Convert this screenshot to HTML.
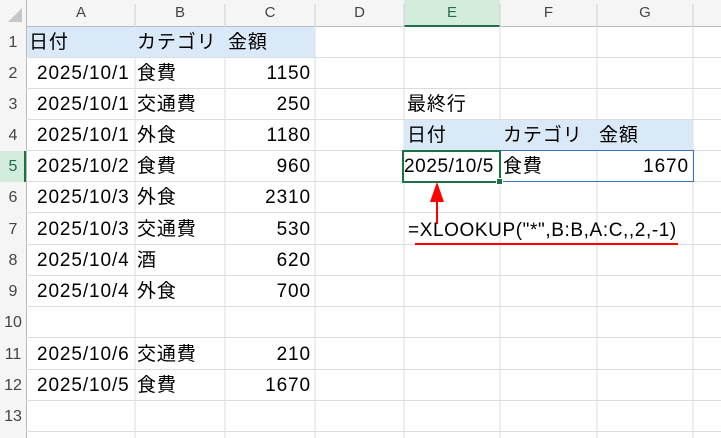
<!DOCTYPE html><html><head><meta charset="utf-8"><style>
body{margin:0;width:721px;height:438px;overflow:hidden;background:#fff;font-family:"Liberation Sans","Noto Sans CJK JP",sans-serif;position:relative}
.a{position:absolute;white-space:nowrap}
.t{font-size:19px;letter-spacing:0.9px;color:#000;line-height:31px}
.h{font-size:15px;color:#444;text-align:center;line-height:26px}
.rn{font-size:16px;color:#444;text-align:center;line-height:31px;width:26px;left:0}
</style></head><body>
<div class="a" style="left:0;top:0;width:721px;height:26px;background:#f5f5f5;border-bottom:1px solid #bbb"></div>
<div class="a" style="left:0;top:0;width:26px;height:438px;background:#f5f5f5;border-right:1px solid #bbb"></div>
<svg class="a" style="left:0;top:0" width="26" height="26"><polygon points="22,8 22,22 8,22" fill="#c6c6c6"/></svg>
<div class="a" style="left:404px;top:0;width:96px;height:25px;background:#d3ecdc;border-bottom:2px solid #1e7145"></div>
<div class="a" style="left:0;top:151px;width:24px;height:31px;background:#d3ecdc;border-right:2px solid #1e7145"></div>
<svg class="a" style="left:26px;top:26px" width="695" height="412">
<g stroke="#dcdcdc" stroke-width="1">
<line x1="109" y1="0" x2="109" y2="412"/><line x1="199" y1="0" x2="199" y2="412"/><line x1="289" y1="0" x2="289" y2="412"/><line x1="378" y1="0" x2="378" y2="412"/><line x1="474" y1="0" x2="474" y2="412"/><line x1="571" y1="0" x2="571" y2="412"/><line x1="667" y1="0" x2="667" y2="412"/>
<line x1="0" y1="31.5" x2="695" y2="31.5"/><line x1="0" y1="62.5" x2="695" y2="62.5"/><line x1="0" y1="93.5" x2="695" y2="93.5"/><line x1="0" y1="124.5" x2="695" y2="124.5"/><line x1="0" y1="155.5" x2="695" y2="155.5"/><line x1="0" y1="186.5" x2="695" y2="186.5"/><line x1="0" y1="218.5" x2="695" y2="218.5"/><line x1="0" y1="249.5" x2="695" y2="249.5"/><line x1="0" y1="280.5" x2="695" y2="280.5"/><line x1="0" y1="311.5" x2="695" y2="311.5"/><line x1="0" y1="343.5" x2="695" y2="343.5"/><line x1="0" y1="374.5" x2="695" y2="374.5"/><line x1="0" y1="405.5" x2="695" y2="405.5"/>
</g>
</svg>
<svg class="a" style="left:0;top:0" width="721" height="26"><g stroke="#d0d0d0"><line x1="135" y1="4" x2="135" y2="26"/><line x1="225" y1="4" x2="225" y2="26"/><line x1="315" y1="4" x2="315" y2="26"/><line x1="404" y1="4" x2="404" y2="26"/><line x1="500" y1="4" x2="500" y2="26"/><line x1="597" y1="4" x2="597" y2="26"/><line x1="693" y1="4" x2="693" y2="26"/></g></svg>
<div class="a h" style="left:27px;top:0;width:108px">A</div><div class="a h" style="left:135px;top:0;width:90px">B</div><div class="a h" style="left:225px;top:0;width:90px">C</div><div class="a h" style="left:315px;top:0;width:89px">D</div><div class="a h" style="left:404px;top:0;width:96px;color:#1e7145">E</div><div class="a h" style="left:500px;top:0;width:97px">F</div><div class="a h" style="left:597px;top:0;width:96px">G</div>
<div class="a rn" style="top:27px">1</div><div class="a rn" style="top:58px">2</div><div class="a rn" style="top:89px">3</div><div class="a rn" style="top:120px">4</div><div class="a rn" style="top:151px;color:#1e7145">5</div><div class="a rn" style="top:182px">6</div><div class="a rn" style="top:214px">7</div><div class="a rn" style="top:245px">8</div><div class="a rn" style="top:276px">9</div><div class="a rn" style="top:307px">10</div><div class="a rn" style="top:339px">11</div><div class="a rn" style="top:370px">12</div><div class="a rn" style="top:401px">13</div>
<div class="a" style="left:27px;top:27px;width:288px;height:30px;background:#dae9f8"></div>
<div class="a t" style="left:29px;top:27px">日付</div><div class="a t" style="left:137px;top:27px">カテゴリ</div><div class="a t" style="left:228px;top:27px">金額</div>
<div class="a t" style="left:37px;top:58px">2025/10/1</div><div class="a t" style="left:137px;top:58px">食費</div><div class="a t" style="left:225px;top:58px;width:86px;text-align:right">1150</div>
<div class="a t" style="left:37px;top:89px">2025/10/1</div><div class="a t" style="left:137px;top:89px">交通費</div><div class="a t" style="left:225px;top:89px;width:86px;text-align:right">250</div>
<div class="a t" style="left:37px;top:120px">2025/10/1</div><div class="a t" style="left:137px;top:120px">外食</div><div class="a t" style="left:225px;top:120px;width:86px;text-align:right">1180</div>
<div class="a t" style="left:37px;top:151px">2025/10/2</div><div class="a t" style="left:137px;top:151px">食費</div><div class="a t" style="left:225px;top:151px;width:86px;text-align:right">960</div>
<div class="a t" style="left:37px;top:182px">2025/10/3</div><div class="a t" style="left:137px;top:182px">外食</div><div class="a t" style="left:225px;top:182px;width:86px;text-align:right">2310</div>
<div class="a t" style="left:37px;top:214px">2025/10/3</div><div class="a t" style="left:137px;top:214px">交通費</div><div class="a t" style="left:225px;top:214px;width:86px;text-align:right">530</div>
<div class="a t" style="left:37px;top:245px">2025/10/4</div><div class="a t" style="left:137px;top:245px">酒</div><div class="a t" style="left:225px;top:245px;width:86px;text-align:right">620</div>
<div class="a t" style="left:37px;top:276px">2025/10/4</div><div class="a t" style="left:137px;top:276px">外食</div><div class="a t" style="left:225px;top:276px;width:86px;text-align:right">700</div>
<div class="a t" style="left:37px;top:339px">2025/10/6</div><div class="a t" style="left:137px;top:339px">交通費</div><div class="a t" style="left:225px;top:339px;width:86px;text-align:right">210</div>
<div class="a t" style="left:37px;top:370px">2025/10/5</div><div class="a t" style="left:137px;top:370px">食費</div><div class="a t" style="left:225px;top:370px;width:86px;text-align:right">1670</div>
<div class="a t" style="left:407px;top:89px">最終行</div>
<div class="a" style="left:404px;top:120px;width:289px;height:30px;background:#dae9f8"></div>
<div class="a t" style="left:407px;top:120px">日付</div><div class="a t" style="left:503px;top:120px">カテゴリ</div><div class="a t" style="left:599px;top:120px">金額</div>
<div class="a" style="left:403px;top:150px;width:289px;height:30px;border:1px solid #3a72c4"></div>
<div class="a" style="left:402px;top:150px;width:95px;height:29px;border:2px solid #1e7145"></div>
<div class="a" style="left:496px;top:178px;width:5px;height:5px;background:#1e7145;border:1px solid #fff"></div>
<div class="a t" style="left:404px;top:151px;letter-spacing:0.6px">2025/10/5</div><div class="a t" style="left:503px;top:151px">食費</div><div class="a t" style="left:597px;top:151px;width:92px;text-align:right">1670</div>
<svg class="a" style="left:420px;top:180px" width="30" height="50"><polygon points="17,2 10,22 24,22" fill="#f00"/><line x1="17" y1="20" x2="17" y2="44" stroke="#f00" stroke-width="2"/></svg>
<div class="a t" style="left:408px;top:215px;letter-spacing:0.6px">=XLOOKUP("*",B:B,A:C,,2,-1)</div>
<div class="a" style="left:415px;top:243px;width:263px;height:2px;background:#f00"></div>
</body></html>
